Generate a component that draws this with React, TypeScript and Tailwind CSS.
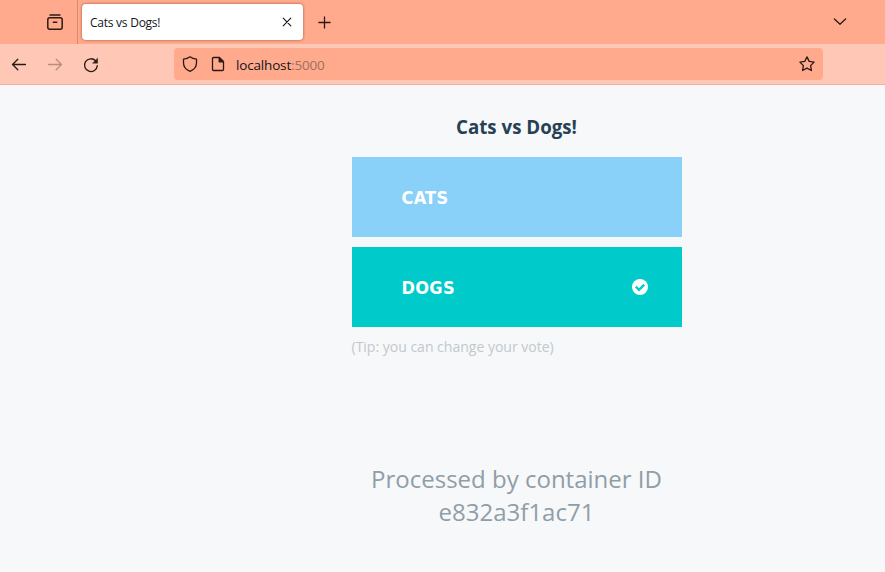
import type { ReactNode } from "react";

function Icon({ className, children }: { className?: string; children: ReactNode }) {
  return (
    <svg
      viewBox="0 0 16 16"
      width="16"
      height="16"
      fill="none"
      stroke="currentColor"
      strokeWidth="1.3"
      strokeLinecap="round"
      strokeLinejoin="round"
      className={`block shrink-0 ${className ?? ""}`}
    >
      {children}
    </svg>
  );
}

function TabBar() {
  return (
    <div className="flex h-11 bg-[#ffaa8d] text-[#2b1a14]">
      <div className="flex w-[78px] border-r border-[#d18b74] pt-[14px] pl-[47px]">
        <Icon>
          <path d="M3 1h10" />
          <rect x="0.8" y="3.8" width="14.4" height="11.4" rx="2" strokeWidth="1.5" />
          <path d="M6.3 8.3h3.4" strokeWidth="1.5" />
        </Icon>
      </div>
      <div className="mt-1 ml-1 flex h-9 w-[221px] items-center justify-between rounded bg-white pr-[8px] pl-2 shadow-[0_0_3px_rgba(110,40,20,0.65)]">
        <span className="pt-[2px] text-[12px] tracking-[-0.25px] text-[#15141a]">Cats vs Dogs!</span>
        <Icon className="text-[#15141a]">
          <path d="M4.2 4.2l7.6 7.6M11.8 4.2l-7.6 7.6" strokeWidth="1.1" />
        </Icon>
      </div>
      <Icon className="mt-[15px] ml-[14px]">
        <path d="M7.500 1.900v11.200M1.900 7.500h11.200" />
      </Icon>
      <Icon className="mt-[13px] mr-[37px] ml-auto">
        <path d="M2.4 6L8 11.2 13.6 6" />
      </Icon>
    </div>
  );
}

function NavBar() {
  return (
    <div className="flex h-[41px] border-b border-[#f0b29b] bg-[#ffc8b6] text-[#2b1a14]">
      <Icon className="mt-[13px] ml-[11px]">
        <path d="M14.500 7.500H1.500M6.800 2.200L1.500 7.500l5.300 5.300" />
      </Icon>
      <Icon className="mt-[13px] ml-5 text-[#b88d7f]">
        <path d="M1.500 7.500h13M9.200 2.200l5.300 5.300-5.300 5.300" />
      </Icon>
      <Icon className="mt-[13px] ml-5">
        <path d="M14.300 8.600A6.400 6.400 0 1 1 12.600 3.800" />
        <path d="M14.6 1.3v4.9H9.7z" fill="currentColor" strokeWidth="0.4" />
      </Icon>
      <div className="mt-1 ml-[75px] flex h-8 w-[649px] items-center rounded bg-[#ffaa8d] pr-2 pl-2">
        <Icon>
          <path d="M8 .8c2 1.5 4.1 2.1 6.5 2.3v3.7c0 4-2.4 7-6.5 8.500-4.1-1.5-6.5-4.5-6.5-8.500V3.1C3.900 2.900 6 2.300 8 .8z" />
        </Icon>
        <Icon className="ml-3">
          <path d="M9.200 1.500H3.500a1 1 0 0 0-1 1v11a1 1 0 0 0 1 1h9a1 1 0 0 0 1-1V5.800z" />
          <path d="M9.200 1.500v4.300h4.300z" fill="currentColor" />
        </Icon>
        <span className="ml-[10px] pt-[2px] text-[13.5px] leading-[18px] tracking-[-0.17px] text-[#15141a]">
          localhost<span className="text-[#a06f5d]">:5000</span>
        </span>
        <Icon className="ml-auto">
          <path d="M8 .9l2.200 4.500 4.900.7-3.500 3.500.8 4.900L8 12.200l-4.400 2.300.8-4.900L.9 6.100l4.900-.7z" />
        </Icon>
      </div>
    </div>
  );
}

function VoteButton({ label, color, selected = false }: { label: string; color: string; selected?: boolean }) {
  return (
    <button className={`flex h-20 w-full items-center justify-between pr-[34px] pl-[50px] text-white ${color}`}>
      <span className="font-['DejaVu_Sans_Condensed','DejaVu_Sans',sans-serif] text-[18px] font-bold tracking-[0.3px] [font-stretch:condensed]">
        {label}
      </span>
      {selected && (
        <svg viewBox="0 0 16 16" width="16" height="16" className="block">
          <circle cx="8" cy="8" r="8" fill="white" />
          <path d="M3.800 7.600l3.200 3.200 5.200-5.200" fill="none" stroke="#00cbca" strokeWidth="2.300" />
        </svg>
      )}
    </button>
  );
}

export default function App() {
  return (
    <div className="flex h-[572px] w-[885px] flex-col overflow-hidden bg-[#f7f8f9] font-['Open_Sans',sans-serif]">
      <TabBar />
      <NavBar />
      <main className="ml-[351.5px] w-[330px] pt-7">
        <h1 className="text-center text-[18.72px] leading-7 font-bold text-[#264154]">Cats vs Dogs!</h1>
        <div className="mt-4 flex flex-col gap-[10px]">
          <VoteButton label="CATS" color="bg-[#8ad1f9]" />
          <VoteButton label="DOGS" color="bg-[#00cbca]" selected />
        </div>
        <p className="mt-[10px] text-[14px] leading-5 text-[#c0c9ce]">(Tip: you can change your vote)</p>
        <p className="mt-[105px] text-center text-[24px] leading-[33px] text-[#8f9ea8]">
          Processed by container ID e832a3f1ac71
        </p>
      </main>
    </div>
  );
}
